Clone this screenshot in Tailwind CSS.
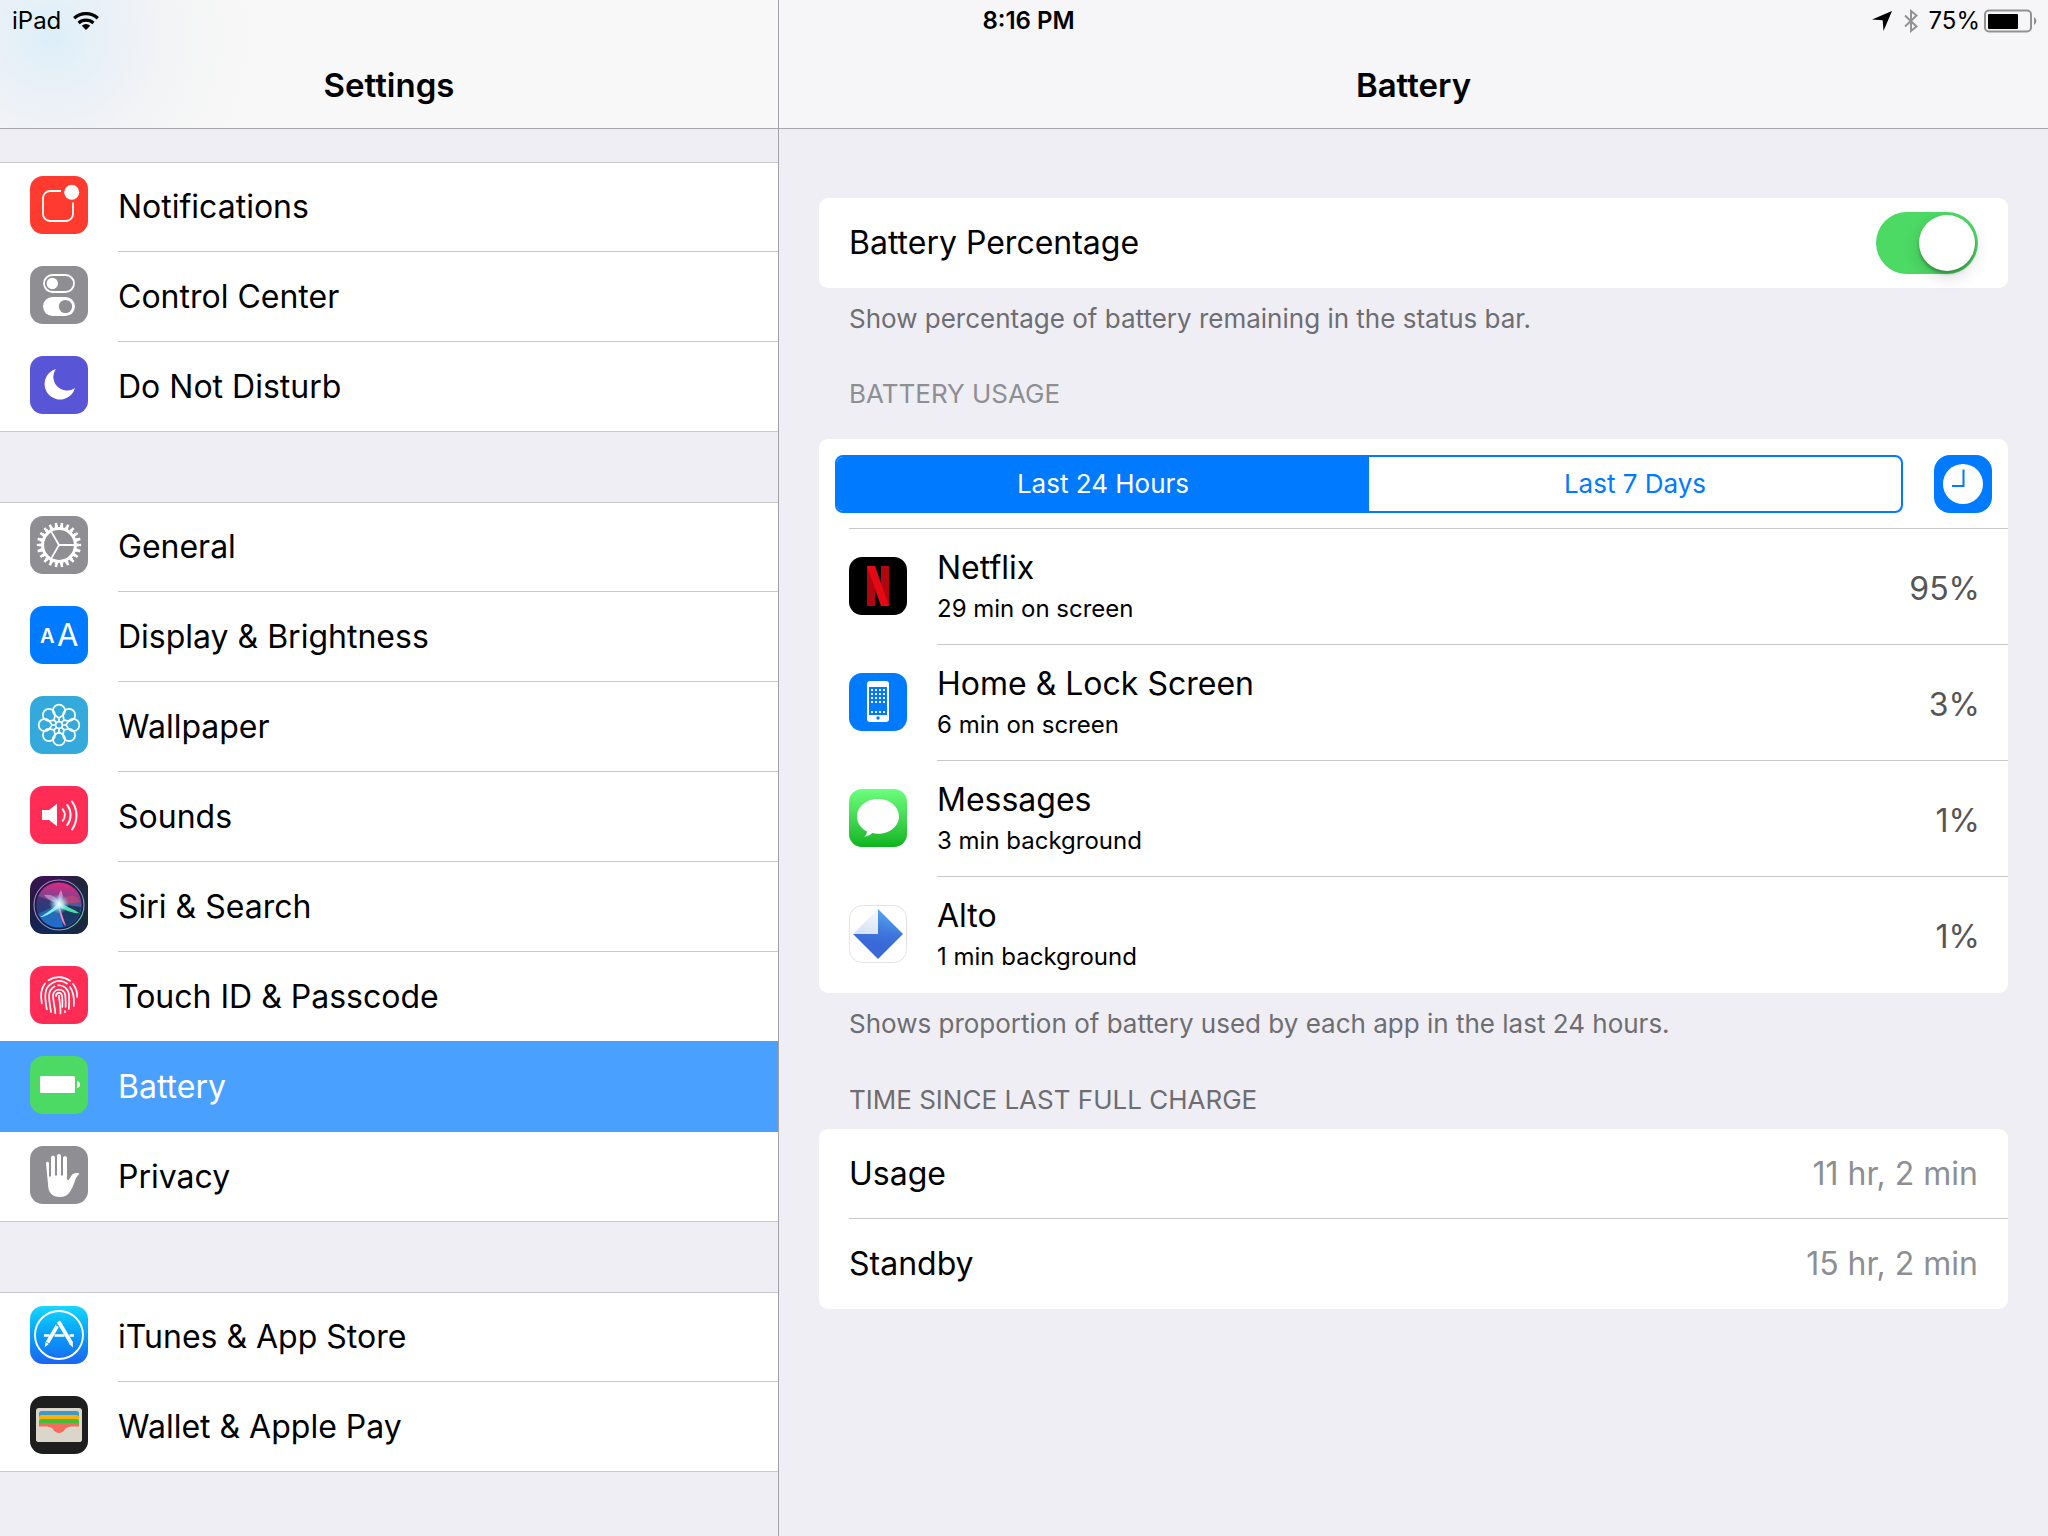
<!DOCTYPE html>
<html lang="en">
<head>
    <meta charset="UTF-8">
    <meta name="viewport" content="width=device-width, initial-scale=1.0">
    <title>Settings - Battery</title>
    <script src="https://cdn.jsdelivr.net/npm/@tailwindcss/browser@4"></script>
</head>
<body class="relative min-h-screen bg-[#efeef4] text-black font-['Inter','Liberation_Sans',sans-serif] text-[32px] leading-10">

    <!-- Status bar, lies over both navigation bars -->
    <div class="absolute inset-x-0 top-0 h-[42px] pl-3 pr-[11px] grid grid-cols-[1fr_auto_1fr] items-center text-2xl leading-7">
        <div class="flex items-center gap-3">
            <span>iPad</span>
            <svg class="w-[26px] h-[18px]" viewBox="0 0 26 18" fill="none" stroke="#000" stroke-width="3.2" aria-hidden="true">
                <path d="M1.2 6.2a17.5 17.5 0 0 1 23.6 0" />
                <path d="M5.6 11a11 11 0 0 1 14.8 0" />
                <path d="M13 18l-4.2-4.3a6 6 0 0 1 8.4 0z" fill="#000" stroke="none" />
            </svg>
        </div>
        <span class="pl-2 font-semibold">8:16 PM</span>
        <div class="flex items-center justify-end">
            <svg class="w-5 h-5 mr-3" viewBox="0 0 20 20" aria-hidden="true"><path d="M20 0L11.5 20l-.8-10.7L0 8.6z" /></svg>
            <svg class="w-[14px] h-6 mr-2.5" viewBox="0 0 14 24" fill="none" stroke="#929294" stroke-width="2" aria-hidden="true">
                <path d="M1 6.5l11.5 11L7 22V2l5.500 4.500L1 17.500" />
            </svg>
            <span class="mr-1">75%</span>
            <svg class="w-[53px] h-6" viewBox="0 0 53 24" aria-hidden="true">
                <rect x="1" y="1.500" width="46" height="21" rx="4" fill="none" stroke="#929294" stroke-width="2" />
                <rect x="4" y="5" width="30" height="15" rx="1" />
                <path d="M50 8a4.500 4.500 0 0 1 0 8z" fill="#929294" />
            </svg>
        </div>
    </div>

    <div class="grid grid-cols-[779fr_1269fr] min-h-screen">

        <!-- Sidebar -->
        <aside class="border-r border-[#a2a1a7]">
            <header class="h-[129px] pt-[65px] border-b border-[#a7a7ac] bg-[radial-gradient(circle_at_52px_36px,#dceef8_0px,#e4f0f8_30px,#ecf1f7_70px,#f3f4f5_120px,#f8f8f8_200px)] text-center">
                <h1 class="text-[33px] leading-10 font-semibold">Settings</h1>
            </header>

            <nav class="mt-[33px] flex flex-col gap-[70px]">
                <ul class="bg-white shadow-[inset_0_1px_#c8c7cc,inset_0_-1px_#c8c7cc]">
                    <li>
                        <a href="#notifications" class="flex h-[90px] pl-[30px] gap-[30px]">
                            <svg class="w-[58px] h-[58px] mt-[14px] rounded-[13px] bg-[#ff3b30]" viewBox="0 0 58 58" fill="none" stroke="#fff" stroke-width="1.800" aria-hidden="true">
                                <path d="M31 15H20a7 7 0 0 0-7 7v16a7 7 0 0 0 7 7h16a7 7 0 0 0 7-7V26.500" />
                                <circle cx="41.700" cy="16.300" r="7.500" fill="#fff" stroke="none" />
                            </svg>
                            <span class="flex-1 flex items-center border-b border-[#c8c7cc]">Notifications</span>
                        </a>
                    </li>
                    <li>
                        <a href="#control-center" class="flex h-[90px] pl-[30px] gap-[30px]">
                            <svg class="w-[58px] h-[58px] mt-[14px] rounded-[13px] bg-[#8e8e93]" viewBox="0 0 58 58" aria-hidden="true">
                                <rect x="14" y="9" width="30" height="17" rx="8.500" fill="none" stroke="#fff" stroke-width="1.800" />
                                <circle cx="22.300" cy="17.500" r="5.700" fill="#fff" />
                                <rect x="13" y="31" width="32" height="19" rx="9.500" fill="#fff" />
                                <circle cx="35.500" cy="40.500" r="6.600" fill="#8e8e93" />
                            </svg>
                            <span class="flex-1 flex items-center border-b border-[#c8c7cc]">Control Center</span>
                        </a>
                    </li>
                    <li>
                        <a href="#do-not-disturb" class="flex h-[90px] pl-[30px] gap-[30px]">
                            <svg class="w-[58px] h-[58px] mt-[14px] rounded-[13px] bg-[#5856d6]" viewBox="0 0 58 58" aria-hidden="true">
                                <path fill="#fff" d="M26 13A15.500 15.500 0 1 0 45 32A13.600 13.600 0 0 1 26 13z" />
                            </svg>
                            <span class="flex-1 flex items-center">Do Not Disturb</span>
                        </a>
                    </li>
                </ul>

                <ul class="bg-white shadow-[inset_0_1px_#c8c7cc,inset_0_-1px_#c8c7cc]">
                    <li>
                        <a href="#general" class="flex h-[90px] pl-[30px] gap-[30px]">
                            <svg class="w-[58px] h-[58px] mt-[14px] rounded-[13px] bg-[#8e8e93]" viewBox="0 0 58 58" fill="none" stroke="#fff" aria-hidden="true">
                                <circle cx="29" cy="29" r="16.400" stroke-width="3" />
                                <circle cx="29" cy="29" r="18.500" stroke-width="2.500" pathLength="44" stroke-dasharray="1.200 .8" stroke-dashoffset=".6" />
                                <circle cx="29" cy="29" r="20.500" stroke-width="3.400" pathLength="44" stroke-dasharray=".84 1.160" stroke-dashoffset=".42" />
                                <path stroke-width="1.800" d="M45 29H29L21 15.100M29 29l-8 13.900" />
                            </svg>
                            <span class="flex-1 flex items-center border-b border-[#c8c7cc]">General</span>
                        </a>
                    </li>
                    <li>
                        <a href="#display" class="flex h-[90px] pl-[30px] gap-[30px]">
                            <svg class="w-[58px] h-[58px] mt-[14px] rounded-[13px] bg-[#007aff]" viewBox="0 0 58 58" fill="#fff" aria-hidden="true">
                                <text x="10" y="37" font-size="20" font-weight="600">A</text>
                                <text x="27" y="39.500" font-size="31" font-weight="400">A</text>
                            </svg>
                            <span class="flex-1 flex items-center border-b border-[#c8c7cc]">Display &amp; Brightness</span>
                        </a>
                    </li>
                    <li>
                        <a href="#wallpaper" class="flex h-[90px] pl-[30px] gap-[30px]">
                            <svg class="w-[58px] h-[58px] mt-[14px] rounded-[13px] bg-[#34aadc]" viewBox="0 0 58 58" fill="none" stroke="#fff" stroke-width="1.700" aria-hidden="true">
                                <defs>
                                    <path id="petal" d="M29 25.500V22L24.600 19a6.100 6.100 0 1 1 8.800 0L29 22" />
                                </defs>
                                <circle cx="29" cy="29" r="3.400" />
                                <use href="#petal" />
                                <use href="#petal" transform="rotate(45 29 29)" />
                                <use href="#petal" transform="rotate(90 29 29)" />
                                <use href="#petal" transform="rotate(135 29 29)" />
                                <use href="#petal" transform="rotate(180 29 29)" />
                                <use href="#petal" transform="rotate(225 29 29)" />
                                <use href="#petal" transform="rotate(270 29 29)" />
                                <use href="#petal" transform="rotate(315 29 29)" />
                            </svg>
                            <span class="flex-1 flex items-center border-b border-[#c8c7cc]">Wallpaper</span>
                        </a>
                    </li>
                    <li>
                        <a href="#sounds" class="flex h-[90px] pl-[30px] gap-[30px]">
                            <svg class="w-[58px] h-[58px] mt-[14px] rounded-[13px] bg-[#ff2d55]" viewBox="0 0 58 58" fill="none" stroke="#fff" stroke-width="2" stroke-linecap="round" aria-hidden="true">
                                <path d="M12 24h7l8-6.300v22.600L19 34h-7z" fill="#fff" stroke="none" />
                                <path d="M32.800 23.300a9.500 9.500 0 0 1 0 11.400" />
                                <path d="M37.200 19a16.500 16.500 0 0 1 0 20" />
                                <path d="M42 15.500a24 24 0 0 1 0 28" />
                            </svg>
                            <span class="flex-1 flex items-center border-b border-[#c8c7cc]">Sounds</span>
                        </a>
                    </li>
                    <li>
                        <a href="#siri" class="flex h-[90px] pl-[30px] gap-[30px]">
                            <svg class="w-[58px] h-[58px] mt-[14px] rounded-[13px]" viewBox="0 0 58 58" aria-hidden="true">
                                <defs>
                                    <linearGradient id="siri-bg" x1="0" y1="0" x2="0" y2="1">
                                        <stop offset="0" stop-color="#3a1353" />
                                        <stop offset=".55" stop-color="#1b1b3e" />
                                        <stop offset="1" stop-color="#14275a" />
                                    </linearGradient>
                                    <linearGradient id="siri-side" x1="0" y1="0" x2="1" y2="0">
                                        <stop offset=".4" stop-color="#1f2937" stop-opacity="0" />
                                        <stop offset="1" stop-color="#1b2a3a" />
                                    </linearGradient>
                                    <linearGradient id="siri-orb" x1=".5" y1="0" x2=".4" y2="1">
                                        <stop offset="0" stop-color="#e0287f" />
                                        <stop offset=".3" stop-color="#8a3f8f" />
                                        <stop offset=".55" stop-color="#2f66a8" />
                                        <stop offset="1" stop-color="#1c6fd0" />
                                    </linearGradient>
                                    <linearGradient id="siri-ring" x1="0" y1="0" x2="1" y2="1">
                                        <stop offset="0" stop-color="#c078b8" />
                                        <stop offset=".5" stop-color="#7b8ec8" />
                                        <stop offset="1" stop-color="#58d0a8" />
                                    </linearGradient>
                                    <radialGradient id="siri-glow">
                                        <stop offset="0" stop-color="#fff" />
                                        <stop offset=".4" stop-color="#bff4ff" stop-opacity=".8" />
                                        <stop offset="1" stop-color="#7fd8f0" stop-opacity="0" />
                                    </radialGradient>
                                </defs>
                                <rect width="58" height="58" fill="url(#siri-bg)" />
                                <rect width="58" height="58" fill="url(#siri-side)" />
                                <circle cx="29" cy="29" r="23" fill="url(#siri-orb)" />
                                <path d="M29 28L51 31A22.500 22.500 0 0 1 33 51z" fill="#182a4c" opacity=".75" />
                                <path d="M29 28L8 20A22.500 22.500 0 0 0 8 38z" fill="#2a2158" opacity=".6" />
                                <path d="M29 28C36 18 46 16 50 26C44 28 36 27 29 28z" fill="#d04a70" opacity=".6" />
                                <path d="M29 28C27 22 29 17 31 14C33 18 34 23 29 28z" fill="#f0a0d0" opacity=".7" />
                                <path d="M29 28C22 26 17 23 14 19C22 18 27 21 29 28z" fill="#e8b8e0" opacity=".55" />
                                <path d="M30 26C25 31 16 38 10 41C14 42 25 35 31 30z" fill="#7ff0ee" />
                                <path d="M28 26C36 30 45 34 49 37C44 38 34 34 28 30z" fill="#48e0a8" />
                                <path d="M28 27C31 34 33 42 36 50C32 48 30 38 28 30z" fill="#f484c0" />
                                <circle cx="29" cy="28" r="10" fill="url(#siri-glow)" />
                                <circle cx="29" cy="29" r="25" fill="none" stroke="url(#siri-ring)" stroke-width="1.200" />
                                <circle cx="29" cy="29" r="23.300" fill="none" stroke="#221845" stroke-width="1.400" opacity=".7" />
                            </svg>
                            <span class="flex-1 flex items-center border-b border-[#c8c7cc]">Siri &amp; Search</span>
                        </a>
                    </li>
                    <li>
                        <a href="#passcode" class="flex h-[90px] pl-[30px] gap-[30px]">
                            <svg class="w-[58px] h-[58px] mt-[14px] rounded-[13px] bg-[#ff2d55]" viewBox="0 0 58 58" fill="none" stroke="#fff" stroke-width="1.700" stroke-linecap="round" aria-hidden="true">
                                <path d="M18.500 14.300a19 19 0 0 1 21.500.5" />
                                <path d="M11.800 37.500c-1.200-7-1.600-14.500 3.200-20" />
                                <path d="M43 18c3 3.500 4.300 8 4.200 13" />
                                <path d="M16.800 43.300c-1-6-2-11-1.400-15.500A13.800 13.800 0 0 1 37 17.500" />
                                <path d="M40 21c2.800 4 4.600 10 3.800 19" />
                                <path d="M21 46c-.8-6-2.300-12.500-1.800-17A9.900 9.900 0 0 1 24.500 20.500" />
                                <path d="M28 19.300c6-.5 10.500 4 11 10 .4 5 .3 9.500-.2 13.500" />
                                <path d="M25.300 47.300c-.3-6.500-2.300-13-2.300-18a6.200 6.200 0 0 1 12.300-.3c.4 5 .5 9 .3 12" />
                                <path d="M35 45v1.300" />
                                <path d="M30.500 47.500c.4-7-1.500-13-1.500-18" />
                                <path d="M26 30c0-4 5.500-4.500 6 0 .6 4 .5 8 .3 11" />
                            </svg>
                            <span class="flex-1 flex items-center">Touch ID &amp; Passcode</span>
                        </a>
                    </li>
                    <li>
                        <a href="#battery" aria-current="page" class="flex h-[90px] pl-[30px] gap-[30px] bg-[#4aa0ff] text-white shadow-[0_-1px_#4aa0ff]">
                            <svg class="w-[58px] h-[58px] mt-[14px] rounded-[13px] bg-[#4cd964]" viewBox="0 0 58 58" fill="#fff" aria-hidden="true">
                                <rect x="10" y="20" width="35" height="17" rx="1.500" />
                                <path d="M47 25c4 .5 4 6.500 0 7z" />
                            </svg>
                            <span class="flex-1 flex items-center">Battery</span>
                        </a>
                    </li>
                    <li>
                        <a href="#privacy" class="flex h-[90px] pl-[30px] gap-[30px]">
                            <svg class="w-[58px] h-[58px] mt-[14px] rounded-[13px] bg-[#8e8e93]" viewBox="0 0 58 58" aria-hidden="true">
                                <path fill="#fff" d="M16 17.500c0-2.300 3-2.300 3 0V30.500h2V11.500c0-2.500 4-2.500 4 0V29.500h2V10c0-2.700 4-2.700 4 0V29.500h2V12c0-2.500 4-2.500 4 0V33c.5 1.200 1.200 1.500 2 .5l2.200-3.500c1.600-2.400 4-3.300 7.400-2.700c.8.300.9.700.3 1.200c-2.300 1.700-3.200 4-4 6.500c-1.500 4.500-3.200 9-6 12.300c-2.300 2.700-5 3.700-9 3.700c-7.500 0-11.900-4.300-11.900-13z" />
                            </svg>
                            <span class="flex-1 flex items-center">Privacy</span>
                        </a>
                    </li>
                </ul>

                <ul class="bg-white shadow-[inset_0_1px_#c8c7cc,inset_0_-1px_#c8c7cc]">
                    <li>
                        <a href="#app-store" class="flex h-[90px] pl-[30px] gap-[30px]">
                            <svg class="w-[58px] h-[58px] mt-[14px] rounded-[13px] bg-linear-to-b from-[#1bd6fd] to-[#1d62f0]" viewBox="0 0 58 58" fill="none" stroke="#fff" aria-hidden="true">
                                <circle cx="29" cy="29" r="24" stroke-width="1.900" />
                                <path stroke-width="2.600" d="M14 29.500h5.500M24.500 29.500h10M39.500 29.500h4.500" />
                                <path stroke-width="3.800" d="M27.500 19.500L17.500 36.500" />
                                <path stroke-width="3.800" d="M28.500 15.500L41.500 37.500" />
                                <path stroke-width="1" stroke="#1f9bf8" d="M25.800 18.800l3.200 1.800" />
                                <path fill="#fff" stroke="none" d="M15.500 36l3.200 2-4 3.200zM39.300 38l3.400-2 .3 5.500z" />
                            </svg>
                            <span class="flex-1 flex items-center border-b border-[#c8c7cc]">iTunes &amp; App Store</span>
                        </a>
                    </li>
                    <li>
                        <a href="#wallet" class="flex h-[90px] pl-[30px] gap-[30px]">
                            <svg class="w-[58px] h-[58px] mt-[14px] rounded-[13px] bg-[#1e1e1e]" viewBox="0 0 58 58" aria-hidden="true">
                                <rect x="6" y="12" width="46" height="34" rx="3" fill="#dad7ca" />
                                <path fill="#3c99c8" d="M9 19v-1.500a2.500 2.500 0 0 1 2.500-2.500h35a2.500 2.500 0 0 1 2.500 2.500V31H9z" />
                                <path fill="#ffb003" d="M9 23v-1.500a2.500 2.500 0 0 1 2.500-2.500h35a2.500 2.500 0 0 1 2.500 2.500V31H9z" />
                                <path fill="#40bf3b" d="M9 27v-1.500a2.500 2.500 0 0 1 2.500-2.500h35a2.500 2.500 0 0 1 2.500 2.500V31H9z" />
                                <path fill="#f26d5f" d="M9 29.500a2.500 2.500 0 0 1 2.500-2.500h35a2.500 2.500 0 0 1 2.500 2.500V31H9z" />
                                <path fill="#dad7ca" d="M6 30.500h14v1h18v-1h14V43a3 3 0 0 1-3 3H9a3 3 0 0 1-3-3z" />
                                <path fill="#f26d5f" d="M18 30h22v1c-3.500.2-4.300 1.300-5.500 3c-1.300 1.800-3 2.900-5.500 2.900s-4.200-1.100-5.500-2.900c-1.200-1.700-2-2.800-5.500-3z" />
                            </svg>
                            <span class="flex-1 flex items-center">Wallet &amp; Apple Pay</span>
                        </a>
                    </li>
                </ul>
            </nav>
        </aside>

        <!-- Battery details -->
        <main>
            <header class="h-[129px] pt-[65px] border-b border-[#a7a7ac] bg-[#f6f6f8] text-center">
                <h2 class="text-[33px] leading-10 font-semibold">Battery</h2>
            </header>

            <div class="px-10 pt-[69px]">
                <div class="flex items-center justify-between h-[90px] px-[30px] rounded-[9px] bg-white">
                    <label for="battery-percentage">Battery Percentage</label>
                    <input id="battery-percentage" type="checkbox" role="switch" checked
                        class="appearance-none w-[102px] h-[62px] p-[3px] flex justify-end rounded-full bg-[#4cd964] before:block before:w-14 before:h-14 before:rounded-full before:bg-white before:shadow-[0_6px_16px_rgba(0,0,0,0.15),0_3px_3px_rgba(0,0,0,0.25)]">
                </div>
                <p class="px-[30px] pt-[11px] text-[26px] leading-10 text-[#6d6d72]">Show percentage of battery remaining in the status bar.</p>

                <h3 class="px-[30px] pt-[35px] pb-[25px] text-[26px] leading-10 text-[#8e8e93]">BATTERY USAGE</h3>
                <section class="rounded-[9px] bg-white">
                    <div class="flex items-center h-[90px] px-4 gap-[31px] relative after:absolute after:bottom-0 after:left-[30px] after:right-0 after:h-px after:bg-[#c8c7cc]">
                        <div class="flex-1 grid grid-cols-2 h-[58px] rounded-lg border-2 border-[#007aff] overflow-hidden text-[26px]">
                            <button type="button" aria-pressed="true" class="bg-[#007aff] text-white">Last 24 Hours</button>
                            <button type="button" aria-pressed="false" class="text-[#007aff]">Last 7 Days</button>
                        </div>
                        <button type="button" aria-label="Show time details" class="w-[58px] h-[58px] rounded-2xl bg-[#007aff]">
                            <svg class="w-[58px] h-[58px]" viewBox="0 0 58 58" fill="none" aria-hidden="true">
                                <circle cx="29" cy="29" r="20" fill="#fff" />
                                <path d="M29.500 14.500V31H18" stroke="#007aff" stroke-width="2" />
                            </svg>
                        </button>
                    </div>
                    <ul>
                        <li class="flex h-[116px] pl-[30px] gap-[30px]">
                            <svg class="w-[58px] h-[58px] mt-7 rounded-[13px] bg-black" viewBox="0 0 58 58" aria-hidden="true">
                                <rect x="18" y="9" width="8" height="40" fill="#b1060f" />
                                <rect x="32" y="9" width="8" height="40" fill="#b1060f" />
                                <rect width="8" height="40" fill="#e50914" transform="translate(18 9) skewX(19.300)" />
                            </svg>
                            <div class="flex-1 flex items-center justify-between pt-1 pr-7 border-b border-[#c8c7cc]">
                                <div>
                                    <p>Netflix</p>
                                    <p class="text-2xl leading-[42px]">29 min on screen</p>
                                </div>
                                <span class="text-[#555]">95%</span>
                            </div>
                        </li>
                        <li class="flex h-[116px] pl-[30px] gap-[30px]">
                            <svg class="w-[58px] h-[58px] mt-7 rounded-[13px] bg-[#007aff]" viewBox="0 0 58 58" aria-hidden="true">
                                <rect x="18" y="8" width="22" height="41" rx="3" fill="#fff" />
                                <rect x="20" y="14" width="18" height="28" fill="#007aff" />
                                <path d="M22 17h14M22 21h14M22 25h14M22 29h14M22 39h14" stroke="#fff" stroke-width="2" stroke-dasharray="2 2" />
                                <circle cx="29" cy="45" r="1.700" fill="#007aff" />
                            </svg>
                            <div class="flex-1 flex items-center justify-between pt-1 pr-7 border-b border-[#c8c7cc]">
                                <div>
                                    <p>Home &amp; Lock Screen</p>
                                    <p class="text-2xl leading-[42px]">6 min on screen</p>
                                </div>
                                <span class="text-[#555]">3%</span>
                            </div>
                        </li>
                        <li class="flex h-[116px] pl-[30px] gap-[30px]">
                            <svg class="w-[58px] h-[58px] mt-7 rounded-[13px] bg-linear-to-b from-[#6cff7e] to-[#05b41a]" viewBox="0 0 58 58" aria-hidden="true">
                                <path fill="#fff" d="M29 10c11.600 0 21 7.800 21 17.400S40.600 44.800 29 44.800c-2 0-4-.2-5.800-.7c-2.200 2-4.800 3.500-8 3.700c1.700-1.200 2.800-3 2.600-5.500C11.900 39.200 8 33.700 8 27.400C8 17.800 17.400 10 29 10z" />
                            </svg>
                            <div class="flex-1 flex items-center justify-between pt-1 pr-7 border-b border-[#c8c7cc]">
                                <div>
                                    <p>Messages</p>
                                    <p class="text-2xl leading-[42px]">3 min background</p>
                                </div>
                                <span class="text-[#555]">1%</span>
                            </div>
                        </li>
                        <li class="flex h-[116px] pl-[30px] gap-[30px]">
                            <svg class="w-[58px] h-[58px] mt-7" viewBox="0 0 58 58" aria-hidden="true">
                                <defs>
                                    <linearGradient id="alto-dark" x1=".6" y1="0" x2=".45" y2=".7">
                                        <stop offset="0" stop-color="#56a8ee" />
                                        <stop offset=".65" stop-color="#3f76dc" />
                                        <stop offset="1" stop-color="#3869d6" />
                                    </linearGradient>
                                    <linearGradient id="alto-light" x1=".7" y1="0" x2=".4" y2="1">
                                        <stop offset="0" stop-color="#f4f8fd" />
                                        <stop offset="1" stop-color="#d5e3f7" />
                                    </linearGradient>
                                </defs>
                                <rect x=".5" y=".5" width="57" height="57" rx="13" fill="#fff" stroke="#e3e3e5" />
                                <path fill="url(#alto-dark)" d="M29 4l25 25-25 25L4 29h25z" />
                                <path fill="url(#alto-light)" d="M29 4v25H4z" />
                            </svg>
                            <div class="flex-1 flex items-center justify-between pt-1 pr-7">
                                <div>
                                    <p>Alto</p>
                                    <p class="text-2xl leading-[42px]">1 min background</p>
                                </div>
                                <span class="text-[#555]">1%</span>
                            </div>
                        </li>
                    </ul>
                </section>
                <p class="px-[30px] pt-[11px] text-[26px] leading-10 text-[#6d6d72]">Shows proportion of battery used by each app in the last 24 hours.</p>

                <h3 class="px-[30px] pt-9 pb-[9px] text-[26px] leading-10 text-[#6d6d72]">TIME SINCE LAST FULL CHARGE</h3>
                <dl class="pl-[30px] rounded-[9px] bg-white">
                    <div class="flex items-center justify-between h-[90px] pr-[30px] border-b border-[#c8c7cc]">
                        <dt>Usage</dt>
                        <dd class="text-[#8e8e93]">11 hr, 2 min</dd>
                    </div>
                    <div class="flex items-center justify-between h-[90px] pr-[30px]">
                        <dt>Standby</dt>
                        <dd class="text-[#8e8e93]">15 hr, 2 min</dd>
                    </div>
                </dl>
            </div>
        </main>
    </div>
</body>
</html>
